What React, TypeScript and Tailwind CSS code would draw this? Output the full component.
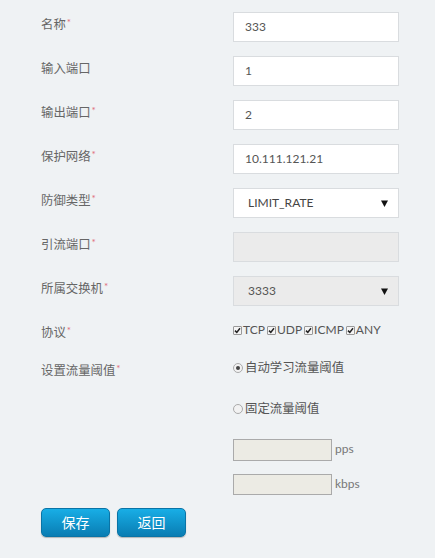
import React from "react";

const font = { fontFamily: '"Lato", "Noto Sans CJK SC", sans-serif' };

function Star() {
  return <span className="text-[#e06b7a] text-[10px] relative -top-[3px] ml-[1px]">*</span>;
}

function Label({ text, req = true }: { text: string; req?: boolean }) {
  return (
    <div className="w-[192px] shrink-0 text-[12.4px] leading-[20px] text-[#666]">
      {text}
      {req && <Star />}
    </div>
  );
}

function Arrow() {
  return (
    <svg width="7" height="7" viewBox="0 0 7 7" className="absolute right-[10px] top-[11px]">
      <polygon points="0,0.5 7,0.5 3.5,7" fill="#111" />
    </svg>
  );
}

function Check() {
  return (
    <span className="inline-flex w-[9px] h-[9px] border border-[#999] bg-[#f4f4f4] rounded-[1px] items-center justify-center mr-[1px]">
      <svg width="7" height="7" viewBox="0 0 7 7">
        <path d="M1 3.6 L2.8 5.4 L6 1.2" stroke="#222" strokeWidth="1.5" fill="none" />
      </svg>
    </span>
  );
}

function Radio({ on }: { on: boolean }) {
  return (
    <span className="inline-flex w-[10px] h-[10px] rounded-full border border-[#aaa] bg-[#f2f2f2] items-center justify-center mr-[2px]">
      {on && <span className="w-[4px] h-[4px] rounded-full bg-[#444]" />}
    </span>
  );
}

export default function App() {
  const textRows: [string, string, boolean][] = [
    ["名称", "333", true],
    ["输入端口", "1", false],
    ["输出端口", "2", true],
    ["保护网络", "10.111.121.21", true],
  ];
  return (
    <div className="w-[435px] h-[558px] bg-[#eff2f4] pl-[41px] pt-[12px]" style={font}>
      <div className="flex flex-col gap-[14px]">
        {textRows.map(([l, v, r]) => (
          <div key={l} className="flex items-start">
            <div className="pt-[3px]">
              <Label text={l} req={r} />
            </div>
            <div className="w-[166px] h-[30px] bg-white border border-[#d9dcdf] pl-[11px] flex items-center text-[12px] text-[#555]">
              {v}
            </div>
          </div>
        ))}
        <div className="flex items-start">
          <div className="pt-[3px]">
            <Label text="防御类型" />
          </div>
          <div className="relative w-[166px] h-[30px] bg-white border border-[#d9dcdf] pl-[14px] flex items-center text-[12px] text-[#444]">
            LIMIT_RATE
            <Arrow />
          </div>
        </div>
        <div className="flex items-start">
          <div className="pt-[3px]">
            <Label text="引流端口" />
          </div>
          <div className="w-[166px] h-[30px] bg-[#ebebeb] border border-[#d9dcdf]" />
        </div>
        <div className="flex items-start">
          <div className="pt-[3px]">
            <Label text="所属交换机" />
          </div>
          <div className="relative w-[166px] h-[30px] bg-[#ebebeb] border border-[#d9dcdf] pl-[14px] flex items-center text-[12px] text-[#555]">
            3333
            <Arrow />
          </div>
        </div>
      </div>

      <div className="flex items-start mt-[14px]">
        <div className="pt-[3px]">
          <Label text="协议" />
        </div>
        <div className="h-[20px] flex items-center text-[12px] text-[#555]">
          <Check />
          <span className="mr-[2px]">TCP</span>
          <Check />
          <span className="mr-[2px]">UDP</span>
          <Check />
          <span className="mr-[2px]">ICMP</span>
          <Check />
          <span>ANY</span>
        </div>
      </div>

      <div className="flex items-start mt-[15px]">
        <div className="pt-[3px]">
          <Label text="设置流量阈值" />
        </div>
        <div className="h-[20px] flex items-center text-[12.4px] text-[#555]">
          <Radio on />
          自动学习流量阈值
        </div>
      </div>

      <div className="flex items-start mt-[18px] pl-[192px]">
        <div className="h-[20px] flex items-center text-[12.4px] text-[#555]">
          <Radio on={false} />
          固定流量阈值
        </div>
      </div>

      <div className="flex items-center mt-[20px] pl-[192px]">
        <div className="w-[99px] h-[22px] bg-[#ecebe4] border border-[#aaa]" />
        <span className="ml-[3px] text-[12px] text-[#777] -mt-[2px]">pps</span>
      </div>
      <div className="flex items-center mt-[13px] pl-[192px]">
        <div className="w-[99px] h-[21px] bg-[#ecebe4] border border-[#aaa]" />
        <span className="ml-[3px] text-[12px] text-[#777] -mt-[2px]">kbps</span>
      </div>

      <div className="flex gap-[7px] mt-[13px]">
        {["保存", "返回"].map((t) => (
          <button
            key={t}
            className="w-[69px] h-[29px] rounded-[5px] border border-[#0a74a6] bg-gradient-to-b from-[#18aee6] to-[#0a7db3] text-white text-[14px] leading-none flex items-center justify-center shadow-[0_1px_1px_rgba(0,0,0,0.25)]"
          >
            {t}
          </button>
        ))}
      </div>
    </div>
  );
}
